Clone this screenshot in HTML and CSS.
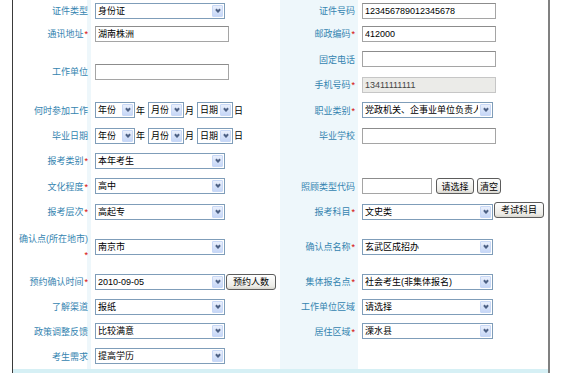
FILE: index.html
```html
<!DOCTYPE html>
<html lang="zh-CN">
<head>
    <meta charset="UTF-8">
    <title>报名信息</title>
    <link rel="stylesheet" href="styles.css">
</head>
<body>
<div class="panel">
    <table class="form">
        <colgroup>
            <col class="c-lab"><col class="c-val"><col class="c-lab"><col class="c-val2">
        </colgroup>
        <tr class="h21">
            <th>证件类型</th>
            <td><span class="sel w130"><select><option>身份证</option></select><i class="arr"></i></span></td>
            <th class="alt">证件号码</th>
            <td><input class="inp w134" type="text" value="123456789012345678"></td>
        </tr>
        <tr class="h25">
            <th>通讯地址<em>*</em></th>
            <td><input class="inp w134" type="text" value="湖南株洲"></td>
            <th class="alt">邮政编码<em>*</em></th>
            <td><input class="inp w134" type="text" value="412000"></td>
        </tr>
        <tr class="h26">
            <th rowspan="2">工作单位</th>
            <td rowspan="2"><input class="inp w134" type="text" value=""></td>
            <th class="alt">固定电话</th>
            <td><input class="inp w134" type="text" value=""></td>
        </tr>
        <tr class="h25">
            <th class="alt">手机号码<em>*</em></th>
            <td><input class="inp w134" type="text" value="13411111111" disabled></td>
        </tr>
        <tr class="h26">
            <th>何时参加工作</th>
            <td>
                <div class="line">
                    <span class="sel w40"><select><option>年份</option></select><i class="arr"></i></span><span class="unit">年</span>
                    <span class="sel w36"><select><option>月份</option></select><i class="arr"></i></span><span class="unit">月</span>
                    <span class="sel w36"><select><option>日期</option></select><i class="arr"></i></span><span class="unit">日</span>
                </div>
            </td>
            <th class="alt">职业类别<em>*</em></th>
            <td><span class="sel w131"><select><option>党政机关、企事业单位负责人</option></select><i class="arr"></i></span></td>
        </tr>
        <tr class="h25">
            <th>毕业日期</th>
            <td>
                <div class="line">
                    <span class="sel w40"><select><option>年份</option></select><i class="arr"></i></span><span class="unit">年</span>
                    <span class="sel w36"><select><option>月份</option></select><i class="arr"></i></span><span class="unit">月</span>
                    <span class="sel w36"><select><option>日期</option></select><i class="arr"></i></span><span class="unit">日</span>
                </div>
            </td>
            <th class="alt">毕业学校</th>
            <td><input class="inp w134" type="text" value=""></td>
        </tr>
        <tr class="h25">
            <th>报考类别<em>*</em></th>
            <td><span class="sel w130"><select><option>本年考生</option></select><i class="arr"></i></span></td>
            <th class="alt"></th>
            <td></td>
        </tr>
        <tr class="h26">
            <th>文化程度<em>*</em></th>
            <td><span class="sel w130"><select><option>高中</option></select><i class="arr"></i></span></td>
            <th class="alt">照顾类型代码</th>
            <td>
                <div class="line">
                    <input class="inp w70" type="text" value="">
                    <button class="btn b-choose" type="button">请选择</button>
                    <button class="btn b-clear" type="button">清空</button>
                </div>
            </td>
        </tr>
        <tr class="h25">
            <th>报考层次<em>*</em></th>
            <td><span class="sel w130"><select><option>高起专</option></select><i class="arr"></i></span></td>
            <th class="alt">报考科目<em>*</em></th>
            <td>
                <div class="line">
                    <span class="sel w131"><select><option>文史类</option></select><i class="arr"></i></span>
                    <button class="btn b-wide up" type="button">考试科目</button>
                </div>
            </td>
        </tr>
        <tr class="h45">
            <th class="two">确认点(所在地市)<br><em>*</em></th>
            <td><span class="sel w130"><select><option>南京市</option></select><i class="arr"></i></span></td>
            <th class="alt">确认点名称<em>*</em></th>
            <td><span class="sel w131"><select><option>玄武区成招办</option></select><i class="arr"></i></span></td>
        </tr>
        <tr class="h25">
            <th>预约确认时间<em>*</em></th>
            <td>
                <div class="line">
                    <span class="sel w130"><select><option>2010-09-05</option></select><i class="arr"></i></span>
                    <button class="btn b-wide" type="button">预约人数</button>
                </div>
            </td>
            <th class="alt">集体报名点<em>*</em></th>
            <td><span class="sel w131"><select><option>社会考生(非集体报名)</option></select><i class="arr"></i></span></td>
        </tr>
        <tr class="h25">
            <th>了解渠道</th>
            <td><span class="sel w130"><select><option>报纸</option></select><i class="arr"></i></span></td>
            <th class="alt">工作单位区域</th>
            <td><span class="sel w131"><select><option>请选择</option></select><i class="arr"></i></span></td>
        </tr>
        <tr class="h24">
            <th>政策调整反馈</th>
            <td><span class="sel w130"><select><option>比较满意</option></select><i class="arr"></i></span></td>
            <th class="alt">居住区域<em>*</em></th>
            <td><span class="sel w131"><select><option>溧水县</option></select><i class="arr"></i></span></td>
        </tr>
        <tr class="h26">
            <th>考生需求</th>
            <td><span class="sel w130"><select><option>提高学历</option></select><i class="arr"></i></span></td>
            <th class="alt"></th>
            <td></td>
        </tr>
    </table>
    <div class="foot"></div>
</div>
</body>
</html>
```

FILE: styles.css
```css
*{
    margin: 0;
    padding: 0;
    box-sizing: border-box;
}
html,body{
    background-color: #ffffff;
    overflow: hidden;
}
body{
    font-family: "Liberation Sans", "Noto Sans CJK SC", sans-serif;
    font-size: 9px;
    color: #000;
}

.panel{
    width: 538px;
    margin-left: 12px;
    border-left: 1px solid #3a3a3a;
    border-right: 2px solid #808080;
}

.form{
    width: 535px;
    table-layout: fixed;
    border-collapse: collapse;
    border-spacing: 0;
}
.c-lab{ width: 78px; }
.c-val{ width: 189px; }
.c-val2{ width: 190px; }

.form th{
    font-weight: normal;
    text-align: right;
    padding: 0 3px 0 0;
    color: #3484b0;
    vertical-align: middle;
    white-space: nowrap;
    box-shadow: inset -4px 0 #eef7fb;
}
.form th.alt{
    background-color: #eef7fb;
    box-shadow: none;
}
.form th.two{
    line-height: 16px;
}
.form th em{
    font-style: normal;
    color: #d40000;
    margin-left: 1px;
}
.form td{
    padding: 0 0 0 4px;
    vertical-align: middle;
}

.h21 > *{ height: 21px; }
.h24 > *{ height: 24px; }
.h25 > *{ height: 25px; }
.h26 > *{ height: 26px; }
.h45 > *{ height: 45px; }

.line{
    display: flex;
    align-items: center;
}

/* 下拉框 */
.sel{
    position: relative;
    display: inline-block;
    height: 16px;
    vertical-align: middle;
}
.sel select{
    -webkit-appearance: none;
    appearance: none;
    width: 100%;
    height: 16px;
    padding: 0 14px 0 2px;
    border: 1px solid #7f9db9;
    background: #fff;
    font: inherit;
    color: #000;
    line-height: 14px;
    outline: none;
}
.sel .arr{
    position: absolute;
    top: 2px;
    right: 2px;
    width: 11px;
    height: 12px;
    border: 1px solid #c8d8f6;
    border-radius: 1px;
    background: linear-gradient(#eaf0fc, #c6d7f7);
}
.sel .arr::after{
    content: "";
    position: absolute;
    left: 3px;
    top: 2px;
    width: 2px;
    height: 2px;
    border-right: 2px solid #4d6185;
    border-bottom: 2px solid #4d6185;
    transform: rotate(45deg);
}
.w130{ width: 130px; }
.w131{ width: 131px; }
.w40{ width: 40px; }
.w36{ width: 36px; }

.unit{
    width: 9px;
    margin: 0 3px 0 1px;
    font-family: "Noto Sans CJK SC", sans-serif;
}

/* 输入框 */
.inp{
    height: 16px;
    padding: 0 2px;
    border: 1px solid #a5a5a5;
    border-top-color: #8c8c8c;
    font: inherit;
    color: #000;
    vertical-align: middle;
    outline: none;
}
.inp:disabled{
    background-color: #ebebe8;
    border-color: #c6c6c6;
    color: #444;
}
.w134{ width: 134px; }
.w70{ width: 70px; }

/* 按钮 */
.btn{
    height: 16px;
    border: 1px solid #5c5c5c;
    border-radius: 3px;
    background: linear-gradient(#ffffff, #ecebe6 80%, #d8d6cf);
    font: inherit;
    color: #000;
    padding: 0;
    text-align: center;
}
.b-choose{ width: 38px; margin-left: 4px; }
.b-clear{ width: 24px; margin-left: 3px; }
.b-wide{ width: 50px; margin-left: 1px; }
.up{ align-self: flex-start; margin-top: -2px; }

.foot{
    height: 4px;
    background-color: #d6f0f5;
}
```
